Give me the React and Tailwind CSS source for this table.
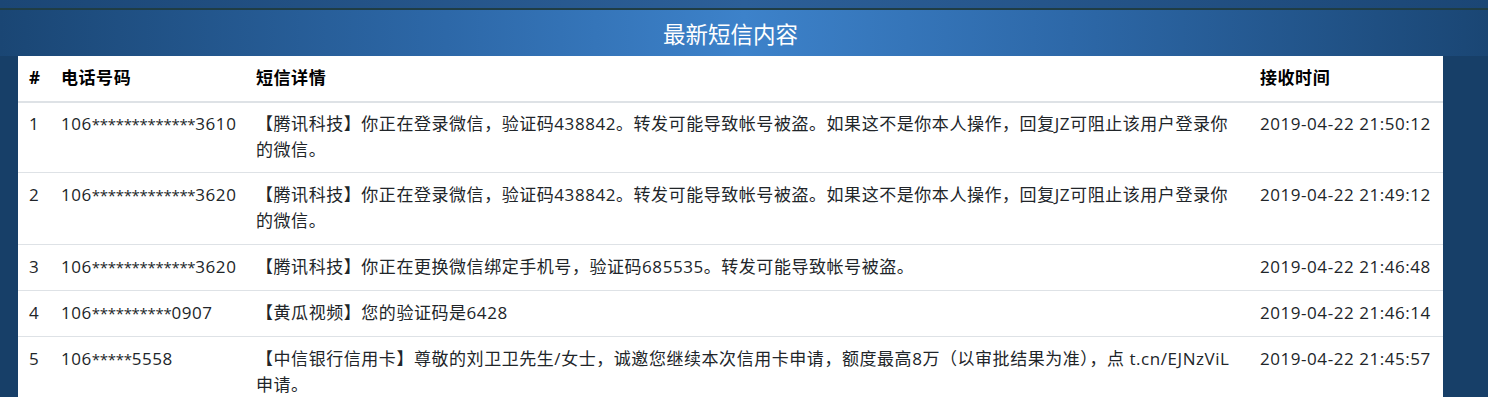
import React from "react";

const rows = [
  {
    id: 1,
    phone: ["106", "*************", "3610"],
    lines: [
      "【腾讯科技】你正在登录微信，验证码438842。转发可能导致帐号被盗。如果这不是你本人操作，回复JZ可阻止该用户登录你",
      "的微信。",
    ],
    time: "2019-04-22 21:50:12",
  },
  {
    id: 2,
    phone: ["106", "*************", "3620"],
    lines: [
      "【腾讯科技】你正在登录微信，验证码438842。转发可能导致帐号被盗。如果这不是你本人操作，回复JZ可阻止该用户登录你",
      "的微信。",
    ],
    time: "2019-04-22 21:49:12",
  },
  {
    id: 3,
    phone: ["106", "*************", "3620"],
    lines: ["【腾讯科技】你正在更换微信绑定手机号，验证码685535。转发可能导致帐号被盗。"],
    time: "2019-04-22 21:46:48",
  },
  {
    id: 4,
    phone: ["106", "**********", "0907"],
    lines: ["【黄瓜视频】您的验证码是6428"],
    time: "2019-04-22 21:46:14",
  },
  {
    id: 5,
    phone: ["106", "*****", "5558"],
    lines: [
      "【中信银行信用卡】尊敬的刘卫卫先生/女士，诚邀您继续本次信用卡申请，额度最高8万（以审批结果为准），点 t.cn/EJNzViL",
      "申请。",
    ],
    time: "2019-04-22 21:45:57",
  },
];

export default function App() {
  return (
    <div
      className="w-[1488px] h-[397px] overflow-hidden bg-[#173f68] text-[17px] leading-[26px] tracking-[0.55px]"
      style={{ fontFamily: '"Open Sans", "Noto Sans CJK SC", sans-serif' }}
    >
      <div className="h-[8px] bg-[linear-gradient(90deg,#1b4675_0%,#2c5f98_50%,#1b4675_100%)]" />
      <div className="h-[2px] bg-[#1f3d45]" />
      <div className="h-[46px] bg-[linear-gradient(90deg,#1a4674_0%,#2d68a8_30%,#3d82ca_50%,#2d68a8_72%,#1a4674_100%)]">
        <div className="w-[1425px] ml-[18px] h-full flex items-center justify-center">
          <span
            className="text-white text-[22.5px] leading-[30px] tracking-normal"
            style={{ fontFamily: '"Noto Sans CJK SC", sans-serif' }}
          >
            最新短信内容
          </span>
        </div>
      </div>
      <div className="ml-[18px] w-[1425px] bg-white">
        <table className="w-full table-fixed border-collapse text-[#212529]">
          <colgroup>
            <col className="w-[32px]" />
            <col className="w-[195px]" />
            <col className="w-[1004px]" />
            <col className="w-[194px]" />
          </colgroup>
          <thead>
            <tr className="border-b-2 border-[#dee2e6] text-black">
              <th className="text-left font-bold pl-[11px] pr-0 pt-[9px] pb-[10px]">#</th>
              <th className="text-left font-bold pl-[11px] pr-[11px] pt-[9px] pb-[10px]">电话号码</th>
              <th className="text-left font-bold pl-[11px] pr-[11px] pt-[9px] pb-[10px]">短信详情</th>
              <th className="text-left font-bold pl-[11px] pr-[11px] pt-[9px] pb-[10px]">接收时间</th>
            </tr>
          </thead>
          <tbody>
            {rows.map((r) => {
              const pad = r.id === 1 ? "pt-[8px] pb-[9px]" : "pt-[9px] pb-[10px]";
              return (
                <tr key={r.id} className="border-t border-[#dee2e6] align-top">
                  <td className={`pl-[11px] pr-0 ${pad}`}>{r.id}</td>
                  <td className={`pl-[11px] pr-[2px] whitespace-nowrap ${pad}`}>
                    {r.phone[0]}
                    <span className="text-[15px] tracking-[-0.3px]">{r.phone[1]}</span>
                    {r.phone[2]}
                  </td>
                  <td className={`pl-[11px] pr-[2px] ${pad}`}>
                    {r.lines.map((l, i) => (
                      <div key={i}>{l}</div>
                    ))}
                  </td>
                  <td className={`pl-[11px] pr-[2px] whitespace-nowrap ${pad}`}>{r.time}</td>
                </tr>
              );
            })}
          </tbody>
        </table>
      </div>
    </div>
  );
}
